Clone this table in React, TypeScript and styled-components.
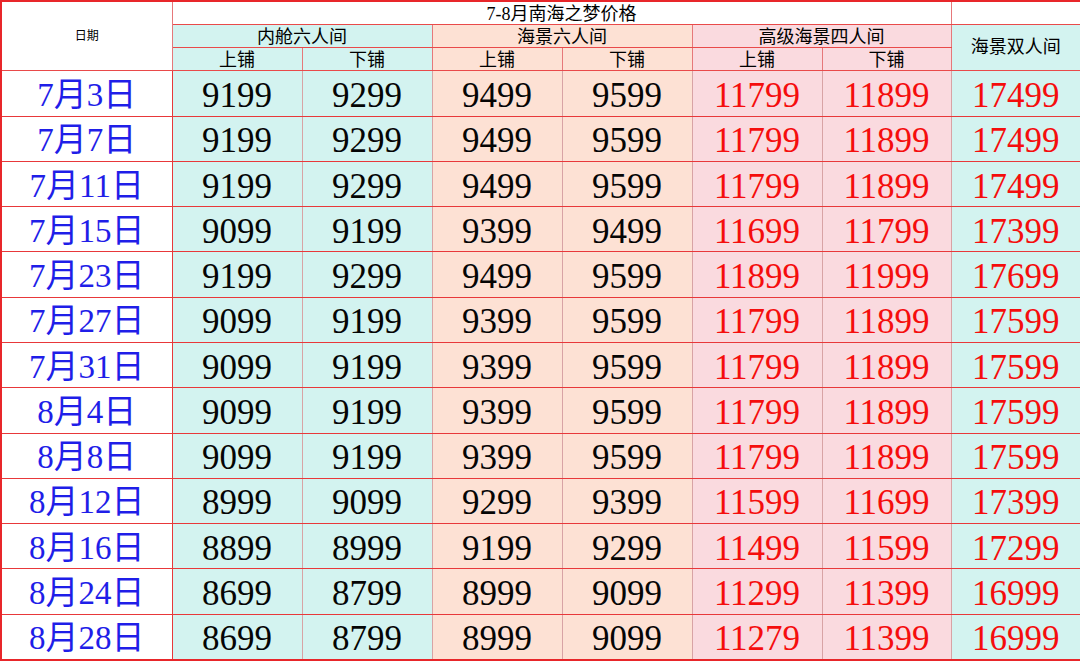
import React from 'react'
import styled, { createGlobalStyle } from 'styled-components'

const Global = createGlobalStyle`
  html, body { margin: 0; padding: 0; background: #fff; overflow: hidden; }
  body { font-family: "Liberation Serif", "Noto Sans CJK SC", serif; }
`

const tones = {
  white: '#ffffff',
  cyan: '#d3f3f0',
  orange: '#fde1d4',
  pink: '#fadadf',
}

type Tone = keyof typeof tones

const Sheet = styled.table`
  width: 1080px;
  height: 661px;
  table-layout: fixed;
  border-collapse: collapse;
  border: 2px solid #e8262a;
  color: #000;
`

const HeadCell = styled.td<{ $tone: Tone; $size?: number; $middle?: boolean }>`
  background: ${p => tones[p.$tone]};
  font-family: "Liberation Serif", "Noto Sans CJK SC", serif;
  font-size: ${p => p.$size ?? 18}px;
  text-align: center;
  vertical-align: ${p => (p.$middle ? 'middle' : 'bottom')};
  line-height: 19px;
  height: 22px;
  padding: 0;
  overflow: hidden;
  border-top: 1px solid #e94a4a;
  border-bottom: 1px solid #e94a4a;
  border-left: 1px solid #e6787a;
  border-right: 1px solid #e6787a;
`

const DateCell = styled.td`
  background: #fff;
  color: #1f1ee8;
  font-size: 33px;
  line-height: 1;
  height: 40px;
  text-align: center;
  padding: 4px 0 0;
  overflow: hidden;
  border: 1px solid #e8383a;
`

const PriceCell = styled.td<{ $tone: Tone; $hot?: boolean; $edge?: boolean }>`
  background: ${p => tones[p.$tone]};
  color: ${p => (p.$hot ? '#f50d0d' : '#050505')};
  font-size: 35px;
  line-height: 1;
  height: 40px;
  text-align: center;
  padding: 4px 0 0;
  overflow: hidden;
  border-top: 1px solid #e8383a;
  border-bottom: 1px solid #e8383a;
  border-left: 1px solid ${p => (p.$edge ? '#e0484a' : '#d8a3a5')};
  border-right: 1px solid #d8a3a5;
`

const rows: [string, number[]][] = [
  ['7月3日', [9199, 9299, 9499, 9599, 11799, 11899, 17499]],
  ['7月7日', [9199, 9299, 9499, 9599, 11799, 11899, 17499]],
  ['7月11日', [9199, 9299, 9499, 9599, 11799, 11899, 17499]],
  ['7月15日', [9099, 9199, 9399, 9499, 11699, 11799, 17399]],
  ['7月23日', [9199, 9299, 9499, 9599, 11899, 11999, 17699]],
  ['7月27日', [9099, 9199, 9399, 9599, 11799, 11899, 17599]],
  ['7月31日', [9099, 9199, 9399, 9599, 11799, 11899, 17599]],
  ['8月4日', [9099, 9199, 9399, 9599, 11799, 11899, 17599]],
  ['8月8日', [9099, 9199, 9399, 9599, 11799, 11899, 17599]],
  ['8月12日', [8999, 9099, 9299, 9399, 11599, 11699, 17399]],
  ['8月16日', [8899, 8999, 9199, 9299, 11499, 11599, 17299]],
  ['8月24日', [8699, 8799, 8999, 9099, 11299, 11399, 16999]],
  ['8月28日', [8699, 8799, 8999, 9099, 11279, 11399, 16999]],
]

const colTones: Tone[] = ['cyan', 'cyan', 'orange', 'orange', 'pink', 'pink', 'cyan']
const widths = [171, 130, 130, 130, 130, 130, 129, 130]

const App = () => {
  return (
    <>
      <Global />
      <Sheet>
        <colgroup>
          {widths.map((w, i) => (
            <col key={i} style={{ width: w }} />
          ))}
        </colgroup>
        <tbody>
          <tr>
            <HeadCell $tone="white" $size={12} $middle rowSpan={3}>
              日期
            </HeadCell>
            <HeadCell $tone="white" colSpan={6}>
              7-8月南海之梦价格
            </HeadCell>
            <HeadCell $tone="white" />
          </tr>
          <tr>
            <HeadCell $tone="cyan" colSpan={2}>内舱六人间</HeadCell>
            <HeadCell $tone="orange" colSpan={2}>海景六人间</HeadCell>
            <HeadCell $tone="pink" colSpan={2}>高级海景四人间</HeadCell>
            <HeadCell $tone="cyan" $middle rowSpan={2}>
              海景双人间
            </HeadCell>
          </tr>
          <tr>
            <HeadCell $tone="cyan">上铺</HeadCell>
            <HeadCell $tone="cyan">下铺</HeadCell>
            <HeadCell $tone="orange">上铺</HeadCell>
            <HeadCell $tone="orange">下铺</HeadCell>
            <HeadCell $tone="pink">上铺</HeadCell>
            <HeadCell $tone="pink">下铺</HeadCell>
          </tr>
          {rows.map(([date, prices]) => (
            <tr key={date}>
              <DateCell>{date}</DateCell>
              {prices.map((p, i) => (
                <PriceCell
                  key={i}
                  $tone={colTones[i]}
                  $hot={i >= 4}
                  $edge={i % 2 === 0}
                >
                  {p}
                </PriceCell>
              ))}
            </tr>
          ))}
        </tbody>
      </Sheet>
    </>
  )
}

export default App
